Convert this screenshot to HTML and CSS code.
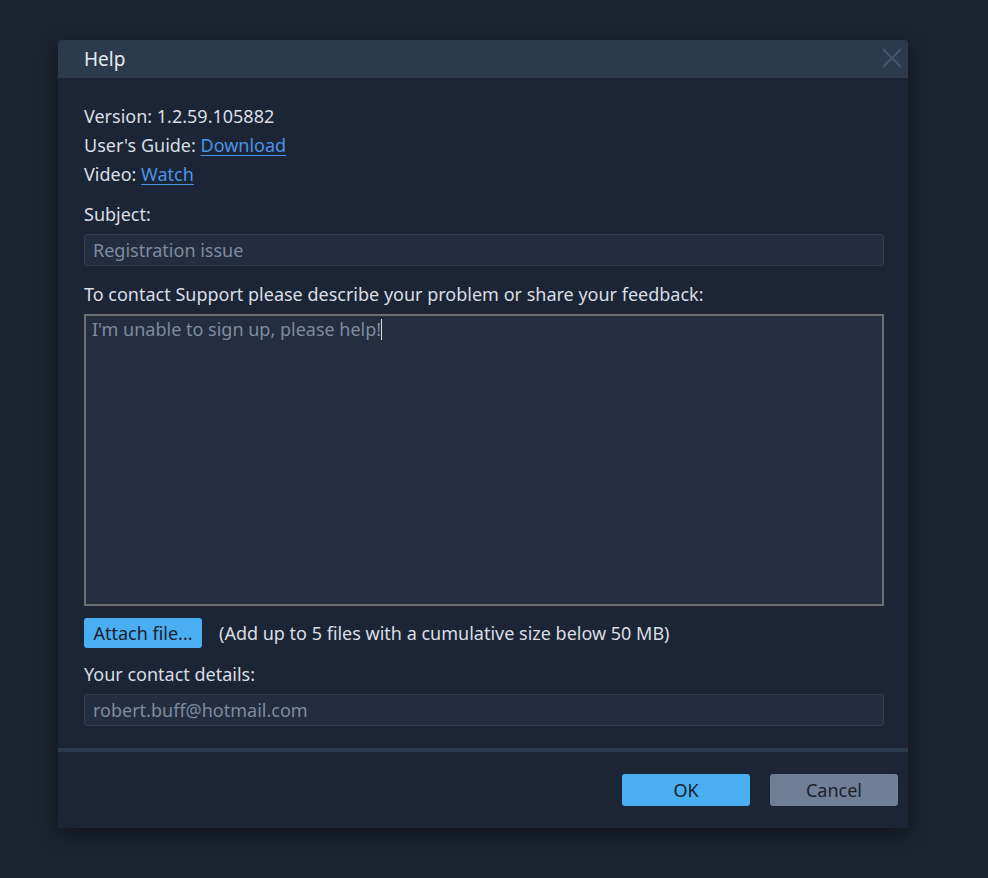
FILE: index.html
```html
<!DOCTYPE html>
<html>
<head>
<meta charset="utf-8">
<link rel="stylesheet" href="styles.css">
</head>
<body>
<div class="dialog">
  <div class="titlebar">
    <span class="title">Help</span>
    <svg class="close" width="20" height="20" viewBox="0 0 20 20"><path d="M1 1 L19 19 M19 1 L1 19" stroke="#465569" stroke-width="2.2" fill="none"/></svg>
  </div>
  <div class="content">
    <div class="info">
      <div class="line">Version: 1.2.59.105882</div>
      <div class="line">User's Guide: <a class="link">Download</a></div>
      <div class="line">Video: <a class="link">Watch</a></div>
    </div>
    <div class="label first">Subject:</div>
    <div class="input">Registration issue</div>
    <div class="label">To contact Support please describe your problem or share your feedback:</div>
    <div class="textarea">I'm unable to sign up, please help!<span class="caret"></span></div>
    <div class="attach-row">
      <button class="btn attach">Attach file...</button>
      <span class="hint">(Add up to 5 files with a cumulative size below 50 MB)</span>
    </div>
    <div class="label contact">Your contact details:</div>
    <div class="input">robert.buff@hotmail.com</div>
  </div>
  <div class="separator"></div>
  <div class="footer">
    <button class="btn ok">OK</button>
    <button class="btn cancel">Cancel</button>
  </div>
</div>
</body>
</html>
```
FILE: styles.css
```css
html, body {
  margin: 0;
  padding: 0;
  background: #1b2431;
  width: 988px;
  height: 878px;
  overflow: hidden;
}
body {
  padding: 40px 0 0 58px;
  box-sizing: border-box;
  font-family: "Noto Sans", "Open Sans", sans-serif;
  color: #d9dee5;
}
.dialog {
  width: 850px;
  height: 788px;
  background: #1c2535;
  border-radius: 3px 3px 0 0;
  box-shadow: 0 6px 22px rgba(0, 0, 0, 0.45);
  display: flex;
  flex-direction: column;
}
.titlebar {
  height: 38px;
  flex: none;
  background: #2b3a4d;
  border-radius: 3px 3px 0 0;
  display: flex;
  align-items: center;
  justify-content: space-between;
  padding: 0 6px 0 26px;
}
.title {
  font-size: 19px;
  color: #e6eaef;
}
.close {
  margin-top: -3px;
}
.content {
  padding: 24px 24px 0 26px;
  display: flex;
  flex-direction: column;
  font-size: 18px;
}
.line {
  line-height: 29px;
  height: 29px;
}
.link {
  color: #4b93e6;
  text-decoration: underline;
  text-underline-offset: 3px;
}
.label {
  line-height: 29px;
  height: 29px;
  margin-top: 14px;
  margin-bottom: 5px;
}
.label.first {
  margin-top: 11px;
}
.label.contact {
  margin-top: 12px;
}
.input {
  height: 32px;
  box-sizing: border-box;
  border: 1px solid #2f3e52;
  border-radius: 3px;
  background: #222d3f;
  color: #7d8c9f;
  padding: 0 8px;
  line-height: 31px;
  font-size: 18px;
}
.textarea {
  height: 292px;
  box-sizing: border-box;
  border: 2px solid #6b6e72;
  background: #232e40;
  color: #7d8c9f;
  padding: 0 6px;
  line-height: 26px;
  font-size: 18px;
}
.caret {
  display: inline-block;
  width: 1px;
  height: 21px;
  background: #d9dee5;
  vertical-align: -4px;
}
.attach-row {
  margin-top: 12px;
  height: 30px;
  display: flex;
  align-items: center;
  gap: 17px;
}
.btn {
  font-family: "Noto Sans", "Open Sans", sans-serif;
  border: none;
  border-radius: 3px;
  color: #19212d;
  padding: 0;
  cursor: default;
}
.attach {
  width: 118px;
  height: 30px;
  background: #4aaef2;
  font-size: 18px;
}
.hint {
  font-size: 18px;
  line-height: 30px;
}
.separator {
  margin-top: 22px;
  height: 4px;
  flex: none;
  background: #2b3a4d;
}
.footer {
  padding: 22px 10px 0 0;
  display: flex;
  justify-content: flex-end;
  gap: 20px;
}
.ok, .cancel {
  width: 128px;
  height: 32px;
  font-size: 18px;
}
.ok {
  background: #4aaef2;
}
.cancel {
  background: #6f7f95;
}
```
